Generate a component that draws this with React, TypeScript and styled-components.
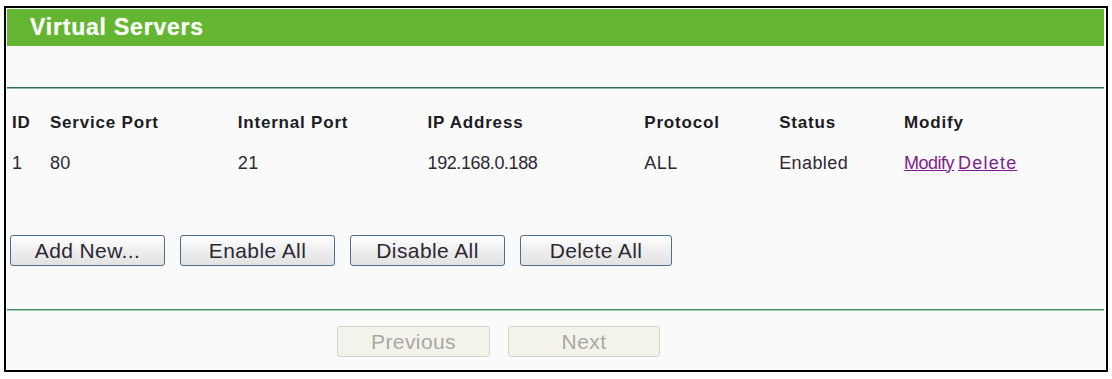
import React from "react";
import styled, { createGlobalStyle } from "styled-components";

const Global = createGlobalStyle`
  html, body { margin: 0; padding: 0; background: #ffffff; }
  body { font-family: "Liberation Sans", Arial, sans-serif; }
`;

const Frame = styled.div`
  box-sizing: border-box;
  margin: 6px 0 0 4px;
  width: 1104px;
  height: 366px;
  border: 2px solid #000;
  padding: 1px 2px 0 1px;
  background: #fafafa;
  display: flex;
  flex-direction: column;
`;

const TitleBar = styled.div`
  height: 37px;
  background: #64b632;
  display: flex;
  align-items: center;
  padding-left: 23px;
  color: #fff;
  font-weight: bold;
  font-size: 23px;
  letter-spacing: 0.8px;
  text-shadow: 0 0 1px rgba(220, 255, 200, 0.6);
`;

const Divider = styled.div<{ $top: number; $dark: string; $light: string }>`
  margin-top: ${(p) => p.$top}px;
  height: 1px;
  background: ${(p) => p.$dark};
  border-bottom: 1px solid ${(p) => p.$light};
`;

const Table = styled.table`
  border-collapse: collapse;
  margin: 15px 0 0 5px;
  table-layout: fixed;
`;

const HeadCell = styled.th<{ $w?: number }>`
  text-align: left;
  padding: 0;
  height: 38px;
  font-size: 17px;
  font-weight: bold;
  letter-spacing: 0.8px;
  color: #1c1c24;
  width: ${(p) => (p.$w ? `${p.$w}px` : "auto")};
  vertical-align: middle;
`;

const Cell = styled.td<{ $ls?: number }>`
  padding: 0;
  height: 42px;
  font-size: 18px;
  color: #2e2836;
  vertical-align: middle;
  letter-spacing: ${(p) => (p.$ls ?? 0.4)}px;
`;

const Link = styled.a<{ $ls: number }>`
  color: #7d1f8a;
  text-decoration: underline;
  cursor: pointer;
  margin-right: 4px;
  letter-spacing: ${(p) => p.$ls}px;
`;

const ButtonRow = styled.div<{ $top: number; $left: number; $gap: number }>`
  display: flex;
  gap: ${(p) => p.$gap}px;
  margin: ${(p) => p.$top}px 0 0 ${(p) => p.$left}px;
`;

const Button = styled.button<{ $w: number }>`
  box-sizing: border-box;
  width: ${(p) => p.$w}px;
  height: 31px;
  border: 1px solid #4f6d8c;
  border-radius: 3px;
  background: linear-gradient(#ffffff, #ededed 55%, #e2e2e2);
  font-family: "Liberation Sans", Arial, sans-serif;
  font-size: 21px;
  letter-spacing: 0.4px;
  color: #2e2836;
  padding: 0;
  cursor: pointer;
`;

const DisabledButton = styled.button<{ $w: number }>`
  box-sizing: border-box;
  width: ${(p) => p.$w}px;
  height: 31px;
  border: 1px solid #d2d2c8;
  border-radius: 3px;
  background: #f4f3ea;
  font-family: "Liberation Sans", Arial, sans-serif;
  font-size: 21px;
  letter-spacing: 0.4px;
  color: #a8a8a8;
  padding: 0;
`;

const cols = [
  { label: "ID", w: 38 },
  { label: "Service Port", w: 188 },
  { label: "Internal Port", w: 190 },
  { label: "IP Address", w: 217 },
  { label: "Protocol", w: 135 },
  { label: "Status", w: 125 },
  { label: "Modify", w: 200 },
];

export default function App() {
  return (
    <>
      <Global />
      <Frame>
        <TitleBar>Virtual Servers</TitleBar>
        <Divider $top={41} $dark="#2f6b4c" $light="#8fb8a0" />
        <Table>
          <thead>
            <tr>
              {cols.map((c) => (
                <HeadCell key={c.label} $w={c.w}>
                  {c.label}
                </HeadCell>
              ))}
            </tr>
          </thead>
          <tbody>
            <tr>
              <Cell>1</Cell>
              <Cell>80</Cell>
              <Cell>21</Cell>
              <Cell $ls={-0.4}>192.168.0.188</Cell>
              <Cell>ALL</Cell>
              <Cell>Enabled</Cell>
              <Cell>
                <Link $ls={-0.5}>Modify</Link>
                <Link $ls={1.2}>Delete</Link>
              </Cell>
            </tr>
          </tbody>
        </Table>
        <ButtonRow $top={51} $left={3} $gap={15}>
          <Button $w={155}>Add New...</Button>
          <Button $w={155}>Enable All</Button>
          <Button $w={155}>Disable All</Button>
          <Button $w={152}>Delete All</Button>
        </ButtonRow>
        <Divider $top={43} $dark="#3f8a5c" $light="#a9cdb5" />
        <ButtonRow $top={15} $left={330} $gap={18}>
          <DisabledButton $w={153}>Previous</DisabledButton>
          <DisabledButton $w={152}>Next</DisabledButton>
        </ButtonRow>
      </Frame>
    </>
  );
}
